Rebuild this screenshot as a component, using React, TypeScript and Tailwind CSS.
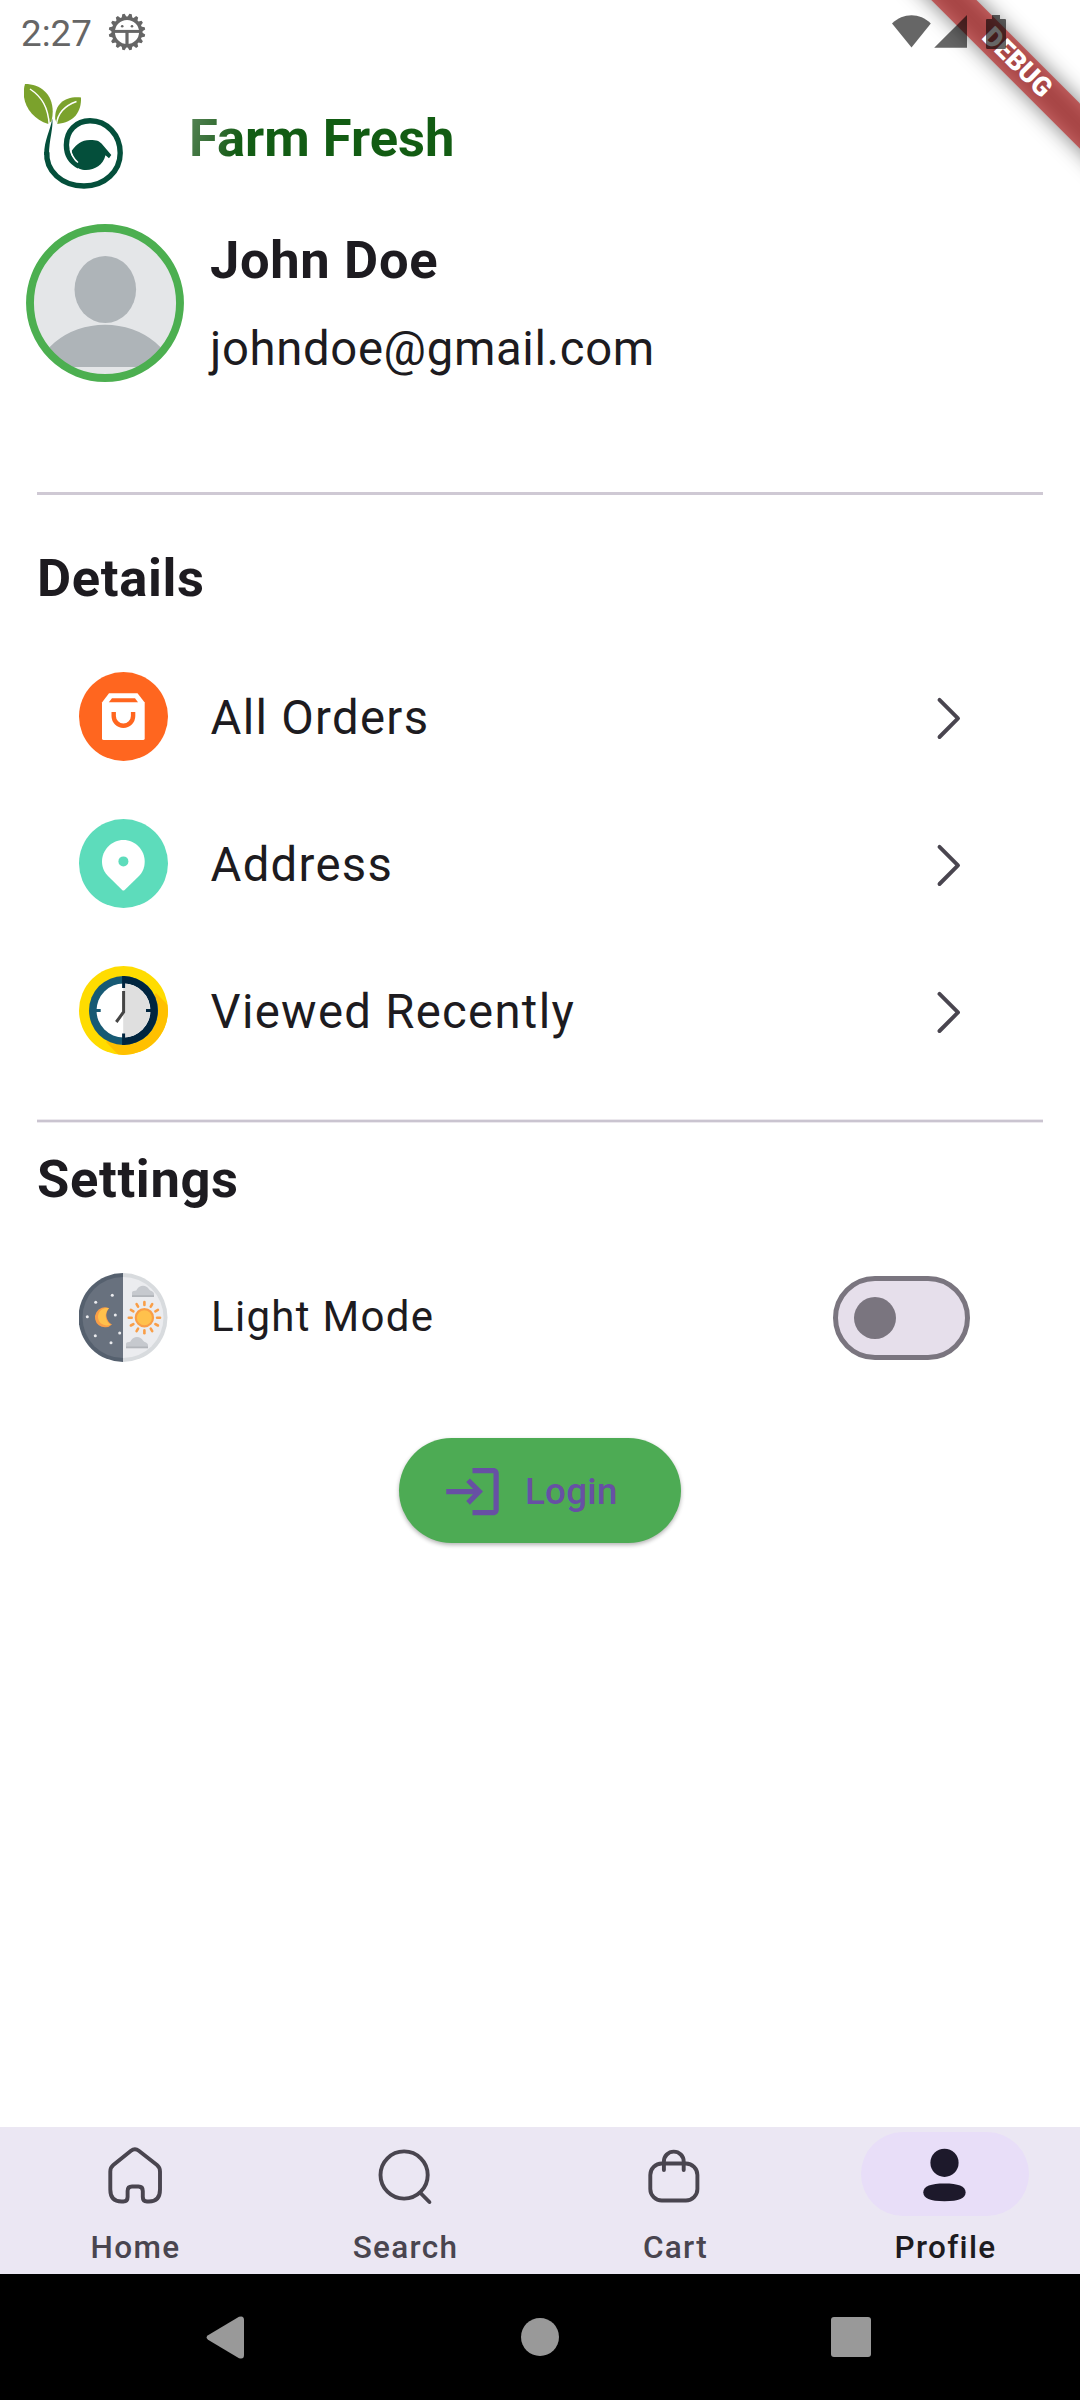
import type { ReactNode } from "react";

function BugIcon() {
  const teeth = Array.from({ length: 16 }, (_, i) => i * 22.5);
  return (
    <svg className="ml-[16px] h-[38px] w-[38px]" viewBox="-19 -19 38 38" fill="none" stroke="#666666">
      <circle r="13.8" strokeWidth="3.4" />
      {teeth.map((a) => (
        <path key={a} d="M-2.6 -14.5 L-1.2 -18.3 H1.2 L2.6 -14.5 Z" fill="#666666" stroke="none" transform={`rotate(${a + 11.25})`} />
      ))}
      <path d="M-13 -0.6 H13" strokeWidth="3" />
      <path d="M0 0 V14" strokeWidth="3.2" />
      <circle cx="-4.8" cy="-5.8" r="1.3" fill="#666666" stroke="none" />
      <circle cx="5" cy="-5.8" r="1.3" fill="#666666" stroke="none" />
    </svg>
  );
}

function StatusIcons() {
  return (
    <svg className="relative z-10 mr-[74px] h-[36px] w-[114px]" viewBox="892 13 114 36" fill="#000000" fillOpacity="0.6">
      <path d="M892 22.5 C903 11.5 920 11.5 930.8 22.5 L911.5 46.5 Z" />
      <path d="M967 14 V46.7 H934.2 Z" />
      <path d="M992 14 H1000 V18 H1005 Q1006 18 1006 19 V46.5 Q1006 48 1004.5 48 H987.5 Q986 48 986 46.5 V19 Q986 18 987 18 H992 Z" />
    </svg>
  );
}

function DebugBanner() {
  return (
    <div className="absolute top-0 right-0 h-[220px] w-[220px] overflow-hidden">
      <div className="absolute top-[47px] left-[-43px] h-[31.5px] w-[400px] rotate-45 bg-black/50 blur-[10.4px]" />
      <div className="absolute top-[47px] left-[-43px] flex h-[31.5px] w-[400px] rotate-45 items-center justify-center bg-[#b71c1c]/63 text-[26.8px] leading-none font-black text-white">
        DEBUG
      </div>
    </div>
  );
}

function Logo() {
  return (
    <svg className="h-[106px] w-[100px]" viewBox="24 84 100 106" fill="none">
      <path d="M25 84 C43 84 57 98 51.5 121 L48.3 124 C30 118 20 101 25 84 Z" fill="#7ba22c" />
      <path d="M30 89 C42 97 48 107 49.3 125" stroke="#ffffff" strokeWidth="1.5" />
      <path d="M81 97.5 C81.5 112 74 122.5 57 124 L55.2 119 C54.5 104 65 96 81 97.5 Z" fill="#7ba22c" />
      <path d="M76.5 101.5 C64 106 57.5 113 56.5 124.5" stroke="#ffffff" strokeWidth="1.4" />
      <path d="M52.3 118.5 C53.5 128 49 140 49 155 L44.2 155 C44 140 50.5 130 52.3 118.5 Z" fill="#044f3b" />
      <path
        d="M46.8 152 C45.5 171 62 186 84 186 C105 186 120.2 171 120.2 153 C120.2 135 107 120.8 90 120.8 C76 120.8 66.4 131 66.4 145 C66.4 155 71 162 79 166"
        stroke="#044f3b"
        strokeWidth="5.4"
      />
      <path
        d="M71.5 151 C77 144 81 140 90 140 C97 140 99 141 101.5 143.5 L111.3 155 L109 158.3 L105.5 155.3 C103 165 95 170 86 170 C81 170 77 168 75 165 L78.5 163 C74 159 72 155 71.5 151 Z"
        fill="#044f3b"
      />
      <path d="M70.4 149 C71.5 155 74 159.5 78 162.5" stroke="#ffffff" strokeWidth="1.4" />
    </svg>
  );
}

function Avatar() {
  return (
    <svg className="h-[158px] w-[158px]" viewBox="26 224 158 158">
      <clipPath id="avatar-clip">
        <circle cx="105" cy="303" r="73" />
      </clipPath>
      <circle cx="105" cy="303" r="73" fill="#e4e6e8" />
      <g clipPath="url(#avatar-clip)" fill="#aeb4b8">
        <ellipse cx="105.3" cy="289.5" rx="30.8" ry="33.5" />
        <path d="M34 385 A71 60.3 0 0 1 176 385 V367 H34 Z" />
        <rect x="26" y="367" width="158" height="20" fill="#e4e6e8" />
      </g>
      <circle cx="105" cy="303" r="75" fill="none" stroke="#4caf50" strokeWidth="7.9" />
    </svg>
  );
}

function OrdersIcon() {
  return (
    <svg className="h-[89px] w-[89px]" viewBox="0 0 89 89" fill="none">
      <circle cx="44.5" cy="44.5" r="44.5" fill="#ff661f" />
      <path d="M30 21.3 H58.5 L65.7 30.5 V66.5 Q65.7 68 64 68 H24.7 Q23 68 23 66.5 V30.5 Z" fill="#ffffff" />
      <path d="M33 26.2 H56 L59 30.3 H29.8 Z" fill="#ff661f" />
      <path d="M34.7 40 V44 a9.7 9.7 0 0 0 19.4 0 V40" stroke="#ff661f" strokeWidth="4.4" />
    </svg>
  );
}

function AddressIcon() {
  return (
    <svg className="h-[89px] w-[89px]" viewBox="0 0 89 89">
      <circle cx="44.5" cy="44.5" r="44.5" fill="#5ddcbb" />
      <path
        d="M44.4 21 C56.5 21 65.7 31 65.7 42.5 C65.7 49 63.5 53.5 59.5 57.5 L45.4 71.2 Q44.4 72 43.4 71.2 L29.5 57.5 C25.5 53.5 23 49 23 42.5 C23 31 32.5 21 44.4 21 Z"
        fill="#ffffff"
      />
      <circle cx="44.4" cy="42.4" r="5" fill="#5ddcbb" />
    </svg>
  );
}

function ClockIcon() {
  return (
    <svg className="h-[89px] w-[89px]" viewBox="0 0 89 89" fill="none">
      <clipPath id="clock-clip">
        <circle cx="44.5" cy="44.5" r="44.5" />
      </clipPath>
      <circle cx="44.5" cy="44.5" r="44.5" fill="#ffdc00" />
      <path d="M77 27 L100 50 V100 H50 L27 76 Z" fill="#ffc000" clipPath="url(#clock-clip)" />
      <circle cx="44.5" cy="44.5" r="34.5" fill="#175a74" />
      <path d="M44.2 10 A34.5 34.5 0 0 1 44.2 79 Z" fill="#00253f" />
      <circle cx="44.5" cy="44.5" r="27" fill="#ffffff" />
      <path d="M44.2 17.5 A27 27 0 0 1 44.2 71.5 Z" fill="#dfdfdf" />
      <path d="M44.6 10 V22 M44.6 67.5 V79 M67 44.5 H74" stroke="#00253f" strokeWidth="3" />
      <path d="M15 44.5 H21.7" stroke="#175a74" strokeWidth="3" />
      <path d="M44.6 25 V46 L37.3 56" stroke="#454545" strokeWidth="3" />
    </svg>
  );
}

const STARS = [
  [33.3, 22.3],
  [16.7, 29.3],
  [8.3, 43.7],
  [36.3, 42],
  [40.7, 60],
  [16.3, 62.7],
  [32, 69.7],
];

function Cloud({ x, y }: { x: number; y: number }) {
  return (
    <g transform={`translate(${x} ${y})`}>
      <path d="M0 11 V7 Q0 5 3 5 Q4.5 5 5 3.5 Q7 0 11 0 Q15 0 17 3.5 Q18 5 20 5.5 Q22 6.5 22 8 V11 Z" fill="#c6c9ce" />
      <path d="M0 9.5 H22 V11.3 H0 Z" fill="#b2b5ba" />
    </g>
  );
}

function DayNightIcon() {
  const rays = Array.from({ length: 12 }, (_, i) => i * 30);
  return (
    <svg className="h-[89px] w-[89px]" viewBox="0 0 89 89" fill="none">
      <path d="M44 0 A44.5 44.5 0 0 0 44 89 Z" fill="#55606e" />
      <path d="M44 4 A40.5 40.5 0 0 0 44 85 Z" fill="#68717e" />
      <path d="M44 0 A44.5 44.5 0 0 1 44 89 Z" fill="#d8dbde" />
      <path d="M44 4 A40.5 40.5 0 0 1 44 85 Z" fill="#ebecef" />
      {STARS.map(([x, y]) => (
        <circle key={y} cx={x} cy={y} r="1.5" fill="#ebecef" />
      ))}
      <path d="M30 35.2 A10 10 0 1 0 33 51.5 A10.5 10.5 0 0 1 30 35.2 Z" fill="#f99e47" />
      <path d="M30 35.2 A8.8 8.8 0 1 0 31.5 51.7 A10.5 10.5 0 0 1 30 35.2 Z" fill="#ffc14c" />
      <g transform="translate(65.4 44.7)">
        <circle r="8.6" fill="#ffc14c" stroke="#f99e47" strokeWidth="2.2" />
        {rays.map((a) => (
          <path key={a} d="M0 -12.7 V-15.6" stroke="#f99e47" strokeWidth="2.6" strokeLinecap="round" transform={`rotate(${a})`} />
        ))}
      </g>
      <Cloud x={53} y={12.7} />
      <Cloud x={47} y={64} />
    </svg>
  );
}

function Chevron() {
  return (
    <svg className="mt-[3px] mr-[104px] h-[63px] w-[63px]" viewBox="0 0 63 63" fill="none" stroke="#49454f" strokeWidth="3.9" strokeLinecap="round" strokeLinejoin="round">
      <path d="M26.5 12.9 L45 31.4 L26.5 50" />
    </svg>
  );
}

function DetailRow({ icon, label }: { icon: ReactNode; label: string }) {
  return (
    <button className="flex h-[147px] w-full items-center pl-[79px] text-left">
      {icon}
      <span className="mt-[3px] ml-[42.5px] flex-1 text-[47.25px] leading-[60px] tracking-[1.3125px]">{label}</span>
      <Chevron />
    </button>
  );
}

function NavIcon({ children }: { children: ReactNode }) {
  return (
    <svg className="-ml-px h-[63px] w-[63px]" viewBox="0 0 63 63" fill="none" stroke="currentColor" strokeWidth="3.9" strokeLinecap="round" strokeLinejoin="round">
      {children}
    </svg>
  );
}

function NavItem({ label, active, children }: { label: string; active?: boolean; children: ReactNode }) {
  return (
    <button className={active ? "flex flex-1 flex-col items-center pt-[5px] text-[#1d192b]" : "flex flex-1 flex-col items-center pt-[5px] text-[#49454f]"}>
      <span className={active ? "flex h-[84px] w-[168px] items-center justify-center rounded-full bg-[#e8def8]" : "flex h-[84px] w-[168px] items-center justify-center"}>
        <NavIcon>{children}</NavIcon>
      </span>
      <span className={active ? "mt-[12px] pl-px text-[31.5px] leading-[40px] font-medium tracking-[1.3125px] text-[#1d1b20]" : "mt-[12px] pl-px text-[31.5px] leading-[40px] font-medium tracking-[1.3125px]"}>
        {label}
      </span>
    </button>
  );
}

export default function App() {
  return (
    <div className="relative flex h-[2400px] w-[1080px] flex-col overflow-hidden bg-white font-['Roboto',sans-serif] text-[#1d1b20]">
      <DebugBanner />

      <div className="flex h-[63px] items-center pl-[21px]">
        <span className="mt-[4px] text-[36.75px] leading-[36px] text-[#666666]">2:27</span>
        <BugIcon />
        <span className="flex-1" />
        <StatusIcons />
      </div>

      <header className="flex h-[147px] pt-[21px] pl-[24px]">
        <Logo />
        <h1 className="mt-[24px] ml-[65px] h-[64px] bg-linear-110 from-[#588558] from-0% via-[#125c14] via-22% to-[#125c12] bg-clip-text text-[52.5px] leading-[60px] font-bold text-transparent">
          Farm Fresh
        </h1>
      </header>

      <section className="flex h-[282px] pt-[14px] pl-[26px]">
        <Avatar />
        <div className="mt-[6px] ml-[26px] flex flex-col gap-[29px] leading-[60px] tracking-[0.656px]">
          <span className="text-[52.5px] font-bold">John Doe</span>
          <span className="text-[47.25px]">johndoe@gmail.com</span>
        </div>
      </section>

      <hr className="mx-[37px] h-[3px] border-0 bg-[#cfc9d4]" />

      <h2 className="mt-[53px] ml-[37px] text-[52.5px] leading-[60px] font-bold tracking-[0.656px]">Details</h2>
      <div className="mt-[35px]">
        <DetailRow icon={<OrdersIcon />} label="All Orders" />
        <DetailRow icon={<AddressIcon />} label="Address" />
        <DetailRow icon={<ClockIcon />} label="Viewed Recently" />
      </div>

      <hr className="mx-[37px] mt-[35px] h-[4px] border-y border-[#ece9ee] bg-[#cac4d0]" />

      <h2 className="mt-[26px] ml-[37px] text-[52.5px] leading-[60px] font-bold tracking-[0.656px]">Settings</h2>
      <div className="mt-[35px] flex h-[147px] items-center pl-[79px]">
        <DayNightIcon />
        <span className="-mt-[2px] ml-[43px] flex-1 text-[42px] leading-[56px] tracking-[1.3125px]">Light Mode</span>
        <span className="mr-[110px] flex h-[84px] w-[137px] items-center rounded-full border-[5.25px] border-[#7a757f] bg-[#e6dfeb] pl-[16px]">
          <span className="h-[42px] w-[42px] rounded-full bg-[#7a757f]" />
        </span>
      </div>

      <button className="mt-[47px] flex h-[105px] w-[282px] items-center self-center rounded-full bg-[#4dab54] pl-[42px] text-[#6750a4] shadow-[0_2px_4px_rgba(0,0,0,0.3)]">
        <svg className="mt-px h-[63px] w-[63px]" viewBox="0 0 24 24" fill="currentColor">
          <path d="M11 7L9.6 8.4l2.6 2.6H2v2h10.2l-2.6 2.6L11 17l5-5L11 7zM20 19h-8v2h8c1.1 0 2-.9 2-2V5c0-1.1-.9-2-2-2h-8v2h8V19z" />
        </svg>
        <span className="mt-[3px] ml-[21px] text-[36.75px] leading-[50px] font-medium tracking-[0.2625px]">Login</span>
      </button>

      <nav className="mt-auto flex h-[147px] bg-[#ebe7f3]">
        <NavItem label="Home">
          <path d="M28 7.8 Q31.9 4.8 35.8 7.8 L54 22 Q57 24.5 57 28.5 V46.5 Q57 58.5 46 58.5 H44 Q39.8 58.5 39.8 54 V48 Q39.8 43.5 35.5 43.5 H29 Q24.6 43.5 24.6 48 V54 Q24.6 58.5 20.4 58.5 H18.5 Q7.3 58.5 7.3 46.5 V28.5 Q7.3 24.5 10.3 22 Z" />
        </NavItem>
        <NavItem label="Search">
          <circle cx="31.1" cy="32" r="23.6" />
          <path d="M47.5 50 L56.4 59" />
        </NavItem>
        <NavItem label="Cart">
          <rect x="7.3" y="20.5" width="47.1" height="37" rx="11.5" />
          <path d="M20.9 27 V18.5 a9.9 9.9 0 0 1 19.8 0 V27" />
        </NavItem>
        <NavItem label="Profile" active>
          <circle cx="31.5" cy="19.8" r="14.1" fill="currentColor" stroke="none" />
          <path d="M31.5 40.4 C45 40.4 52.6 43 52.6 49.2 C52.6 55.5 46 58.2 31.5 58.2 C17 58.2 10.3 55.5 10.3 49.2 C10.3 43 18 40.4 31.5 40.4 Z" fill="currentColor" stroke="none" />
        </NavItem>
      </nav>

      <div className="flex h-[126px] items-center bg-black pl-[206px]">
        <svg className="h-[43px] w-[38px]" viewBox="0 0 38 43" fill="#999999">
          <path d="M2 19.3 L33 0.8 Q38 -0.8 38 4 V39 Q38 43.8 33 42.2 L2 23.7 Q-0.8 21.5 2 19.3 Z" />
        </svg>
        <span className="ml-[277px] h-[38px] w-[38px] rounded-full bg-[#999999]" />
        <span className="ml-[272px] h-[40px] w-[40px] rounded-[3px] bg-[#999999]" />
      </div>
    </div>
  );
}
